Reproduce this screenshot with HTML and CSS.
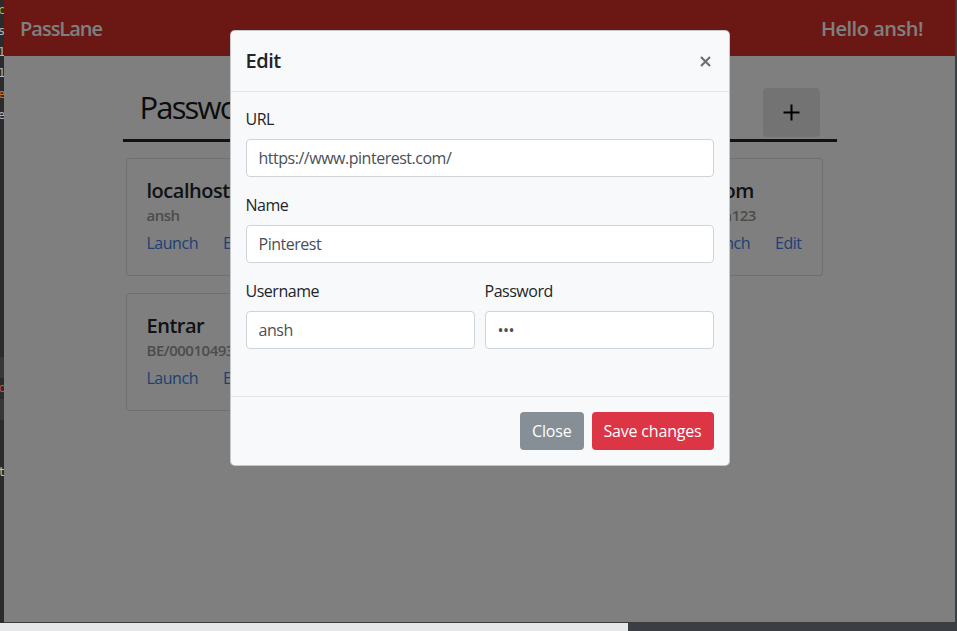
FILE: index.html
```html
<!DOCTYPE html>
<html lang="en">
<head>
<meta charset="utf-8">
<title>PassLane</title>
<link rel="stylesheet" href="styles.css">
</head>
<body>
<div class="desktop">
  <div class="side-left">
    <div class="code-line c-green">c</div>
    <div class="code-line c-grey">s</div>
    <div class="code-line c-grey">1</div>
    <div class="code-line c-grey">1</div>
    <div class="code-line c-orange">e</div>
    <div class="code-line c-grey">e</div>
    <div class="code-line"></div>
    <div class="code-line"></div>
    <div class="code-line"></div>
    <div class="code-line"></div>
    <div class="code-line"></div>
    <div class="code-line"></div>
    <div class="code-line"></div>
    <div class="code-line"></div>
    <div class="code-line"></div>
    <div class="code-line"></div>
    <div class="code-line"></div>
    <div class="code-line band"></div>
    <div class="code-line c-red">c</div>
    <div class="code-line band"></div>
    <div class="code-line"></div>
    <div class="code-line"></div>
    <div class="code-line c-yellow">t</div>
  </div>

  <div class="window">
    <nav class="navbar">
      <span class="brand">PassLane</span>
      <span class="greet">Hello ansh!</span>
    </nav>

    <main class="container">
      <div class="page-head">
        <h2 class="page-title">Passwords</h2>
        <button class="add-btn" type="button" aria-label="Add">
          <svg width="17" height="17" viewBox="0 0 17 17"><path d="M8.5 0.5v16M0.5 8.5h16" stroke="#000" stroke-width="2" fill="none"/></svg>
        </button>
      </div>

      <div class="cards">
        <div class="card">
          <h5 class="card-title">localhost app</h5>
          <h6 class="card-subtitle">ansh</h6>
          <div class="card-links"><a href="#" class="card-link">Launch</a><a href="#" class="card-link">Edit</a></div>
        </div>
        <div class="card">
          <h5 class="card-title">accounts.stackoverflow.com</h5>
          <h6 class="card-subtitle">ansh</h6>
          <div class="card-links"><a href="#" class="card-link">Launch</a><a href="#" class="card-link">Edit</a></div>
        </div>
        <div class="card">
          <h5 class="card-title">x.com</h5>
          <h6 class="card-subtitle">ansh123</h6>
          <div class="card-links"><a href="#" class="card-link">Launch</a><a href="#" class="card-link">Edit</a></div>
        </div>
        <div class="card">
          <h5 class="card-title">Entrar</h5>
          <h6 class="card-subtitle">BE/00010493215</h6>
          <div class="card-links"><a href="#" class="card-link">Launch</a><a href="#" class="card-link">Edit</a></div>
        </div>
      </div>
    </main>

    <div class="backdrop"></div>

    <div class="modal-layer">
      <div class="modal-content">
        <div class="modal-header">
          <h5 class="modal-title">Edit</h5>
          <button class="close-btn" type="button" aria-label="Close">
            <svg width="11" height="11" viewBox="0 0 11 11"><path d="M1 1l9 9M10 1l-9 9" stroke="#6e6f70" stroke-width="2.2" fill="none"/></svg>
          </button>
        </div>
        <div class="modal-body">
          <div class="form-group">
            <label class="form-label">URL</label>
            <input class="form-control" type="text" value="https://www.pinterest.com/">
          </div>
          <div class="form-group">
            <label class="form-label">Name</label>
            <input class="form-control" type="text" value="Pinterest">
          </div>
          <div class="form-row">
            <div class="form-group">
              <label class="form-label">Username</label>
              <input class="form-control" type="text" value="ansh">
            </div>
            <div class="form-group">
              <label class="form-label">Password</label>
              <input class="form-control" type="password" value="abc">
            </div>
          </div>
        </div>
        <div class="modal-footer">
          <button class="btn btn-secondary" type="button">Close</button>
          <button class="btn btn-danger" type="button">Save changes</button>
        </div>
      </div>
    </div>
  </div>

  <div class="side-right"></div>
</div>
<div class="taskbar">
  <div class="tb-light"></div>
  <div class="tb-dark"></div>
</div>
</body>
</html>
```

FILE: styles.css
```css
html, body {
  margin: 0;
  padding: 0;
}

body {
  background: #2b2b2b;
  font-family: "Segoe UI", "Open Sans", "Noto Sans", sans-serif;
  letter-spacing: -0.03em;
  overflow: hidden;
  width: 957px;
  height: 631px;
}

.desktop {
  display: flex;
  height: 623px;
}

.side-left {
  width: 4px;
  background: #2b2b2b;
  overflow: hidden;
  font-family: "DejaVu Sans Mono", monospace;
  font-size: 12px;
  letter-spacing: 0;
}

.code-line {
  height: 21px;
  line-height: 21px;
  text-indent: -2px;
  white-space: nowrap;
}

.code-line.band { background: #353739; }
.c-green { color: #a5c25c; }
.c-grey { color: #a9b7c6; }
.c-orange { color: #cc7832; }
.c-red { color: #c75450; }
.c-yellow { color: #e8bf6a; }

.window {
  width: 951px;
  height: 623px;
  position: relative;
  background: #fff;
  overflow: hidden;
  border-bottom: 1px solid #3c3c3c;
  box-sizing: border-box;
}

.side-right {
  width: 2px;
  background: #3c3f41;
}

.taskbar {
  display: flex;
  height: 8px;
}

.tb-light {
  width: 628px;
  background: #e6e7e8;
}

.tb-dark {
  flex: 1;
  background: #3b3e42;
}

/* navbar */
.navbar {
  height: 56px;
  background: #d62e28;
  display: flex;
  align-items: center;
  justify-content: space-between;
  padding: 0 32px 0 16px;
  color: #fff;
  font-size: 20px;
  font-weight: 600;
}

.brand {
  letter-spacing: -0.05em;
}

/* main */
.container {
  width: 714px;
  margin: 0 auto;
}

.page-head {
  display: flex;
  justify-content: space-between;
  align-items: flex-start;
  margin-top: 32px;
  padding: 0 17px 2px;
  border-bottom: 3px solid #212529;
}

.page-title {
  margin: 0;
  font-size: 31px;
  font-weight: 500;
  line-height: 38px;
  letter-spacing: -0.06em;
  color: #16181b;
}

.add-btn {
  width: 57px;
  height: 49px;
  border: none;
  border-radius: 4px;
  background: #e6e6e6;
  display: flex;
  align-items: center;
  justify-content: center;
  padding: 0;
}

.cards {
  display: flex;
  flex-wrap: wrap;
  justify-content: space-between;
  row-gap: 17px;
  padding: 16px 14px 0 3px;
}

.card {
  border: 1px solid rgba(0, 0, 0, 0.13);
  border-radius: 4px;
  padding: 20px;
  background: #fff;
}

.card-title {
  margin: 0;
  font-size: 20px;
  font-weight: 600;
  line-height: 24px;
  color: #212529;
  white-space: nowrap;
}

.card-subtitle {
  margin: 3px 0 0;
  font-size: 15px;
  font-weight: 600;
  line-height: 18px;
  color: #989898;
  white-space: nowrap;
}

.card-links {
  display: flex;
  margin-top: 7px;
  line-height: 24px;
  font-size: 16px;
}

.card-link {
  color: #3b82e6;
  text-decoration: none;
}

.card-link + .card-link {
  margin-left: 25px;
}

/* modal */
.backdrop {
  position: absolute;
  inset: 0;
  background: rgba(0, 0, 0, 0.5);
}

.modal-layer {
  position: absolute;
  inset: 0;
  display: flex;
  justify-content: center;
  align-items: flex-start;
  padding-top: 30px;
}

.modal-content {
  width: 500px;
  box-sizing: border-box;
  background: #f8f9fa;
  border: 1px solid rgba(0, 0, 0, 0.2);
  border-radius: 5px;
  color: #212529;
}

.modal-header {
  display: flex;
  align-items: center;
  justify-content: space-between;
  padding: 15px;
  border-bottom: 1px solid #e4e6e8;
}

.modal-title {
  margin: 0;
  font-size: 20px;
  font-weight: 600;
  line-height: 30px;
}

.close-btn {
  border: none;
  background: transparent;
  padding: 0;
  width: 11px;
  height: 11px;
  margin-right: 3px;
  display: flex;
}

.modal-body {
  padding: 15px 15px 31px;
}

.form-group {
  margin-bottom: 16px;
}

.form-row {
  display: grid;
  grid-template-columns: 1fr 1fr;
  column-gap: 10px;
}

.form-label {
  display: block;
  font-size: 16px;
  line-height: 24px;
  margin-bottom: 8px;
}

.form-control {
  display: block;
  width: 100%;
  box-sizing: border-box;
  height: 38px;
  padding: 6px 12px;
  font-family: inherit;
  font-size: 16px;
  line-height: 24px;
  letter-spacing: -0.03em;
  color: #495057;
  background: #fff;
  border: 1px solid #ced4da;
  border-radius: 4px;
}

.modal-footer {
  display: flex;
  justify-content: flex-end;
  gap: 8px;
  padding: 15px;
  border-top: 1px solid #e4e6e8;
}

.btn {
  height: 38px;
  padding: 6px 12px;
  border: none;
  border-radius: 4px;
  font-family: inherit;
  font-size: 16px;
  line-height: 24px;
  letter-spacing: -0.012em;
  color: #fff;
}

.btn-secondary { background: #868e96; }
.btn-danger { background: #dc3545; }
```
